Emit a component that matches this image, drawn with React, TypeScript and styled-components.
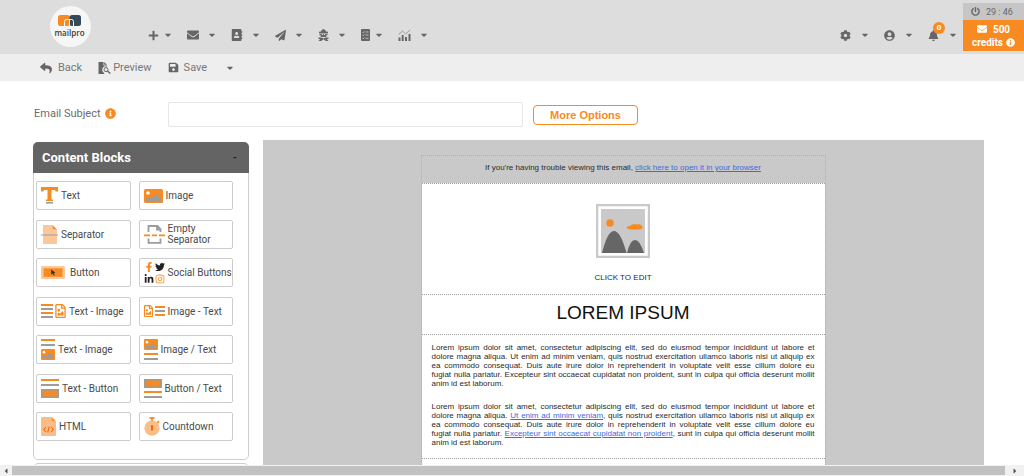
import React from "react";
import styled, { createGlobalStyle } from "styled-components";
import {
  FaAddressBook,
  FaBell,
  FaCaretDown,
  FaCaretLeft,
  FaCaretRight,
  FaCog,
  FaEnvelope,
  FaFacebookF,
  FaInfoCircle,
  FaInstagram,
  FaLinkedinIn,
  FaPaperPlane,
  FaPlus,
  FaPowerOff,
  FaRegFileImage,
  FaReply,
  FaSave,
  FaTwitter,
  FaUserCircle,
} from "react-icons/fa";

const orange = "#f78a20";
const dark = "#666666";
const grey = "#9c9c9c";
const pale = "#fbbd87";

const GlobalStyle = createGlobalStyle`
  * { box-sizing: border-box; }
  body { margin: 0; background: #fff; font-family: Roboto, sans-serif; color: ${dark}; overflow: hidden; }
  button { font: inherit; color: inherit; background: none; border: 0; padding: 0; margin: 0; cursor: pointer; }
  svg { display: block; flex: none; }
`;

const Page = styled.div`
  display: flex;
  flex-direction: column;
  height: 100vh;
  overflow: hidden;
`;

const Header = styled.header`
  display: flex;
  flex: none;
  height: 54px;
  background: #dddddd;
`;

const LogoLink = styled.a`
  width: 41px;
  height: 41px;
  margin: 6px 57px 0 50px;
`;

const Nav = styled.nav`
  display: flex;
  align-items: center;
  gap: 16px;
  height: 16px;
  margin-top: 27px;
`;

const NavButton = styled.button<{ $gap?: number }>`
  display: flex;
  align-items: center;
  gap: ${(p) => p.$gap ?? 10}px;
  height: 16px;
`;

const Caret = styled(FaCaretDown)`
  width: 6px;
  height: 10px;
  overflow: visible;
`;

const Spacer = styled.div`
  flex: 1;
`;

const BellWrap = styled.span`
  position: relative;
  display: block;
`;

const Badge = styled.span`
  position: absolute;
  left: 5px;
  top: -8px;
  width: 12px;
  height: 12px;
  border-radius: 6px;
  background: ${orange};
  color: #fff;
  font-size: 8px;
  font-weight: 700;
  line-height: 12px;
  text-align: center;
`;

const Account = styled.div`
  width: 61px;
  margin: 3px 0 0 7px;
`;

const Timer = styled.div`
  display: flex;
  align-items: center;
  gap: 6px;
  height: 17px;
  padding-left: 8px;
  background: #c6c6c6;
  font-size: 9px;
`;

const Credits = styled.button`
  display: flex;
  flex-direction: column;
  align-items: center;
  justify-content: center;
  width: 100%;
  height: 31px;
  background: ${orange};
  color: #fff;
  font-size: 10px;
  font-weight: 700;
  line-height: 13px;
`;

const CreditLine = styled.span<{ $gap: number }>`
  display: flex;
  align-items: center;
  gap: ${(p) => p.$gap}px;
`;

const Toolbar = styled.div`
  display: flex;
  flex: none;
  align-items: center;
  height: 27px;
  padding-left: 40px;
  background: #eeeeee;
  font-size: 11px;
  color: #777;
  gap: 16px;
`;

const Tool = styled.button<{ $gap: number }>`
  display: flex;
  align-items: center;
  gap: ${(p) => p.$gap}px;
  svg { color: ${dark}; }
`;

const MenuTool = styled(Tool)`
  padding-left: 4px;
`;

const Content = styled.main`
  flex: 1;
  min-height: 0;
  overflow: hidden;
  padding: 21px 40px 0 33px;
`;

const SubjectRow = styled.form`
  display: flex;
  align-items: center;
  height: 25px;
  margin-bottom: 13px;
`;

const SubjectLabel = styled.label`
  display: flex;
  align-items: center;
  gap: 4px;
  width: 135px;
  font-size: 11px;
  padding: 0 0 2px 1px;
  color: #6c6c6c;
`;

const SubjectInput = styled.input`
  flex: 0 1 355px;
  min-width: 0;
  height: 25px;
  border: 1px solid #e6e6e6;
  border-radius: 2px;
  padding: 0 6px;
  font: 11px Roboto, sans-serif;
`;

const MoreOptions = styled.button`
  height: 20px;
  width: 105px;
  margin-left: 10px;
  border: 1px solid ${orange};
  border-radius: 4px;
  background: #fff;
  color: ${orange};
  font: bold 11px "Liberation Sans", sans-serif;
`;

const Columns = styled.div`
  display: grid;
  grid-template-columns: 216px 1fr;
  gap: 14px;
`;

const Sidebar = styled.aside`
  display: flex;
  flex-direction: column;
  gap: 3px;
  padding-top: 2px;
`;

const Panel = styled.section`
  border: 1px solid #cfcfcf;
  border-radius: 5px;
  min-height: 20px;
`;

const PanelHead = styled.button`
  display: flex;
  align-items: center;
  justify-content: space-between;
  width: calc(100% + 2px);
  height: 31px;
  margin: -1px -1px 0;
  padding: 0 12px 0 9px;
  border-radius: 5px 5px 0 0;
  background: #646464;
  color: #fff;
  font-size: 13px;
  font-weight: 700;
`;

const Collapse = styled.span`
  color: #222;
  font-size: 11px;
`;

const Blocks = styled.div`
  display: grid;
  grid-template-columns: 1fr 1fr;
  grid-auto-rows: 29px;
  column-gap: 8px;
  align-content: space-between;
  min-height: 286px;
  padding: 8px 15px 18px 2px;
`;

const BlockButton = styled.button<{ $gap?: number }>`
  display: flex;
  align-items: center;
  gap: ${(p) => p.$gap ?? 3}px;
  padding-left: 4px;
  border: 1px solid #cccccc;
  border-radius: 2px;
  background: #fff;
  color: #4a4a4a;
  font-size: 10px;
  line-height: 11px;
  text-align: left;
  white-space: nowrap;
`;

const SocialIcons = styled.span`
  display: grid;
  grid-template-columns: 10px 10px;
  gap: 2px 1px;
  place-items: center;
  color: #222;
`;

const IconPair = styled.span`
  display: flex;
  align-items: center;
  gap: 2px;
  color: ${orange};
`;

const FileImage = styled(FaRegFileImage)<{ $width: number }>`
  width: ${(p) => p.$width}px;
  height: 14px;
`;

const Canvas = styled.section`
  display: flex;
  justify-content: center;
  align-items: flex-start;
  min-height: 400px;
  padding: 15px 1px 0 0;
  background: #c9c9c9;
`;

const Email = styled.article`
  width: 405px;
  font-family: "Liberation Sans", Arial, sans-serif;
  font-size: 8px;
  line-height: 9px;
  color: #2a2a2a;
  border: 1px dotted #b0b0b0;
`;

const Notice = styled.p`
  margin: 0;
  height: 27px;
  line-height: 24px;
  text-align: center;
`;

const EmailSection = styled.div`
  background: #fff;
  border-top: 1px dotted #a0a0a0;
`;

const ImageSection = styled(EmailSection)`
  display: flex;
  flex-direction: column;
  align-items: center;
  gap: 15px;
  height: 111px;
  padding-top: 20px;
`;

const Title = styled.h1`
  margin: 0;
  height: 39px;
  font-size: 19px;
  font-weight: 400;
  line-height: 35px;
  text-align: center;
  color: #111;
`;

const TextSection = styled(EmailSection)`
  display: flex;
  flex-direction: column;
  gap: 14px;
  padding: 8px 10px 11px;
`;

const Paragraph = styled.p`
  margin: 0;
`;

const Line = styled.span`
  display: block;
  text-align: justify;
  text-align-last: justify;

  &:last-child {
    text-align-last: left;
  }
`;

const EmailLink = styled.a`
  color: #4169e1;
  text-decoration: underline;
`;

const Footer = styled(EmailSection)`
  min-height: 60px;
`;

const ScrollTrack = styled.div`
  display: flex;
  flex: none;
  align-items: center;
  height: 11px;
  background: #f1f1f1;
  color: #555;
`;

const ScrollArrow = styled.span<{ $width: number }>`
  display: flex;
  justify-content: center;
  width: ${(p) => p.$width}px;
`;

const ScrollThumb = styled.div`
  flex: 1;
  height: 9px;
  background: #c1c1c1;
`;

const Logo = () => (
  <svg width="41" height="41" viewBox="0 0 41 41">
    <circle cx="20.500" cy="20.500" r="20.500" fill="#f6f6f6" />
    <rect x="8" y="9" width="12" height="11" rx="2.500" fill={orange} />
    <rect x="19.500" y="9" width="11.500" height="11" rx="2.500" fill="#34495a" />
    <path d="M14.500 20v-4.500q0-2 2-2h5q2 0 2 2V20M19.500 13.500V20" fill="none" stroke="#f6f6f6" strokeWidth="1" />
    <text x="19.500" y="29.500" textAnchor="middle" fontFamily="Open Sans, sans-serif" fontSize="8" fontWeight="600" fill="#3a3a3a">mailpro</text>
  </svg>
);

const AutomationIcon = () => (
  <svg width="11" height="12" viewBox="0 0 11 12" fill="currentColor">
    <path d="M3 2.500Q3.300.8 4.300.8L5.500 0l1.200.8Q7.700.8 8 2.500l2 .3v1.400H1V2.800z" />
    <path d="M1.500 4.800h8v1.400H8.300V8H2.700V6.200H1.500z" />
    <path d="M.500 8.500h3l2 1 2-1h3V10H8.800l1.700 2H7.800L5.500 10.300 3.200 12H.500l1.700-2H.500z" />
    <path d="M3.800 5h1.200v1H3.800zM6 5h1.200v1H6z" fill="#ddd" />
  </svg>
);

const FormIcon = () => (
  <svg width="9" height="12" viewBox="0 0 9 12">
    <rect width="9" height="12" rx="1" fill="currentColor" />
    <path d="M1.500 3l.7.7L3.400 2.300M1.500 6l.7.7 1.200-1.400M1.500 9.200l.7.7 1.200-1.400M4.500 3h3M4.500 6h3M4.500 9.300h3" fill="none" stroke="#ddd" strokeWidth=".7" />
  </svg>
);

const ChartIcon = () => (
  <svg width="13" height="12" viewBox="0 0 13 12">
    <path d="M.500 12V8.500h2V12zM3.700 12V6h2v6zM7 12V8h2v4zM10.500 12V5h2v7z" fill="currentColor" />
    <path d="M.700 5.500L4.500 2l3.200 3L12 1" fill="none" stroke="#999" strokeWidth="1" />
  </svg>
);

const PreviewIcon = () => (
  <svg width="13" height="12" viewBox="0 0 13 12">
    <path d="M.5 0h5v3.500H9v1.200A3.300 3.300 0 0 0 5.200 10L6.500 12h-6zM6.200 0L9 2.800H6.200z" fill="currentColor" />
    <circle cx="8" cy="7.600" r="2" fill="none" stroke="currentColor" strokeWidth="1" />
    <path d="M9.500 9l2.800 2.600" stroke="currentColor" strokeWidth="1.300" />
  </svg>
);

const TextIcon = () => (
  <svg width="17" height="17" viewBox="0 0 17 17">
    <path d="M0 0h17v4.500h-2.300L14 3h-3.500v9.500H12V14H5v-1.500h1.500V3H3l-.7 1.500H0z" fill={orange} />
    <path d="M5 15h7v1.600H5z" fill={grey} />
  </svg>
);

const Landscape = ({ width, height }: { width: number; height: number }) => (
  <svg width={width} height={height} viewBox="0 0 19 14" preserveAspectRatio="none">
    <rect width="19" height="14" rx="1.500" fill={orange} />
    <circle cx="4" cy="4" r="1.800" fill="#fff" />
    <path d="M2 12V10l3-2 2 1.500L12 5l5 5v2z" fill={grey} />
  </svg>
);

const SeparatorIcon = () => (
  <svg width="17" height="19" viewBox="0 0 17 19">
    <path d="M2 0h9.500v4.500H16V19H2z" fill="#fcc79a" />
    <path d="M11.500 0L16 4.500h-4.500z" fill={orange} />
    <path d="M0 10h17" stroke={grey} strokeWidth="1" />
  </svg>
);

const EmptySeparatorIcon = () => (
  <svg width="21" height="19" viewBox="0 0 21 19" fill="none" strokeWidth="1.800">
    <path d="M4.500 7V1h9l3 3v3M4.500 13.500v4.300h12v-4.300M13 1v3.500h3.500" stroke={grey} />
    <path d="M0 10.300h6M8 10.300h5M15 10.300h6" stroke={orange} />
  </svg>
);

const ButtonIcon = () => (
  <svg width="24" height="13" viewBox="0 0 24 13">
    <rect width="24" height="13" rx="1.500" fill="#fcc79a" />
    <rect x="2.500" y="2.300" width="19" height="8.500" fill={orange} />
    <path d="M10 3.500l4.500 3.200-1.800.4 1 2-1 .4-.9-2-1.400 1.200z" fill="#2a3138" />
  </svg>
);

const Lines = ({ width, pitch, colors }: { width: number; pitch: number; colors: string[] }) => {
  const height = (colors.length - 1) * pitch + 2;
  return (
    <svg width={width} height={height} viewBox={`0 0 ${width} ${height}`}>
      {colors.map((color, i) => (
        <rect key={i} y={i * pitch} width={width} height={2} fill={color} />
      ))}
    </svg>
  );
};

const Stack = styled.span`
  display: flex;
  flex-direction: column;
  gap: 3px;
`;

const ButtonShape = () => (
  <svg width="18" height="9" viewBox="0 0 18 9">
    <rect x=".8" y=".8" width="16.400" height="7.400" fill={orange} stroke={grey} strokeWidth="1.600" />
  </svg>
);

const HtmlIcon = () => (
  <svg width="15" height="19" viewBox="0 0 15 19">
    <path d="M1 0h9.500v4.500H15V18q0 1-1 1H1q-1 0-1-1V1q0-1 1-1z" fill={pale} />
    <path d="M10.500 0L15 4.500h-4.500z" fill={orange} />
    <path d="M5 10l-2.300 2.500L5 15M10 10l2.300 2.500L10 15M8.300 9.500l-1.600 6" fill="none" stroke="#f26a10" strokeWidth="1.100" />
  </svg>
);

const CountdownIcon = () => (
  <svg width="16" height="19" viewBox="0 0 16 19">
    <path d="M5.500 0h5v1.800H9V4H7V1.800H5.500zM12.500 5l1.800-1.600 1.500 1.500L14 6.600z" fill={orange} />
    <circle cx="8" cy="11.200" r="7.600" fill={pale} />
    <path d="M7 8h2v5.500H7z" fill="#f26a10" />
  </svg>
);

const Placeholder = () => (
  <svg width="54" height="54" viewBox="0 0 54 54" role="img" aria-label="Image placeholder">
    <rect x="1" y="1" width="52" height="52" fill="#fff" stroke="#c9c9c9" strokeWidth="2.500" />
    <rect x="5" y="5" width="44" height="44" fill="#c9c9c9" />
    <path d="M6 49Q11.500 27 18 27t12.500 22zM31 49q3-13 8-13t9 13z" fill={dark} />
    <circle cx="14" cy="19" r="3.800" fill={orange} />
    <path d="M32 25q-2-1-1-2.300l3-.7q1-2 3-1.500 1.500-1.200 3.500 0 4-1 4.500 1 2 .3 1.500 2-.5 1.800-3 2h-9z" fill={orange} />
  </svg>
);

export default function App() {
  return (
    <>
      <GlobalStyle />
      <Page>
        <Header>
          <LogoLink href="#" aria-label="mailpro"><Logo /></LogoLink>
          <Nav aria-label="Main">
            <NavButton $gap={6} aria-label="Create"><FaPlus size={11} /><Caret /></NavButton>
            <NavButton aria-label="Messages"><FaEnvelope size={12} /><Caret /></NavButton>
            <NavButton aria-label="Contacts"><FaAddressBook size={12} /><Caret /></NavButton>
            <NavButton aria-label="Campaigns"><FaPaperPlane size={11} /><Caret /></NavButton>
            <NavButton aria-label="Automation"><AutomationIcon /><Caret /></NavButton>
            <NavButton $gap={6} aria-label="Forms"><FormIcon /><Caret /></NavButton>
            <NavButton aria-label="Statistics"><ChartIcon /><Caret /></NavButton>
          </Nav>
          <Spacer />
          <Nav aria-label="Account">
            <NavButton $gap={11} aria-label="Settings"><FaCog size={11} /><Caret /></NavButton>
            <NavButton $gap={11} aria-label="Profile"><FaUserCircle size={11} /><Caret /></NavButton>
            <NavButton $gap={11} aria-label="Notifications">
              <BellWrap><FaBell size={11} /><Badge>0</Badge></BellWrap><Caret />
            </NavButton>
          </Nav>
          <Account>
            <Timer><FaPowerOff size={9} />29 : 46</Timer>
            <Credits>
              <CreditLine $gap={6}><FaEnvelope size={10} />500</CreditLine>
              <CreditLine $gap={3}>credits <FaInfoCircle size={9} /></CreditLine>
            </Credits>
          </Account>
        </Header>
        <Toolbar>
          <Tool $gap={6}><FaReply size={12} />Back</Tool>
          <Tool $gap={2}><PreviewIcon />Preview</Tool>
          <Tool $gap={5}><FaSave size={11} />Save</Tool>
          <MenuTool $gap={0} aria-label="More save options"><Caret /></MenuTool>
        </Toolbar>
        <Content>
          <SubjectRow>
            <SubjectLabel htmlFor="subject">Email Subject <FaInfoCircle size={11} color={orange} /></SubjectLabel>
            <SubjectInput id="subject" type="text" />
            <MoreOptions type="button">More Options</MoreOptions>
          </SubjectRow>
          <Columns>
            <Sidebar>
              <Panel>
                <PanelHead>Content Blocks<Collapse>-</Collapse></PanelHead>
                <Blocks>
                  <BlockButton><TextIcon />Text</BlockButton>
                  <BlockButton><Landscape width={19} height={14} />Image</BlockButton>
                  <BlockButton><SeparatorIcon />Separator</BlockButton>
                  <BlockButton><EmptySeparatorIcon /><span>Empty<br />Separator</span></BlockButton>
                  <BlockButton $gap={5}><ButtonIcon />Button</BlockButton>
                  <BlockButton>
                    <SocialIcons>
                      <FaFacebookF size={10} color={orange} />
                      <FaTwitter size={10} />
                      <FaLinkedinIn size={10} />
                      <FaInstagram size={10} color={orange} />
                    </SocialIcons>
                    Social Buttons
                  </BlockButton>
                  <BlockButton>
                    <IconPair><Lines width={12} pitch={4} colors={[orange, grey, orange, grey]} /><FileImage $width={11} /></IconPair>
                    Text - Image
                  </BlockButton>
                  <BlockButton>
                    <IconPair><FileImage $width={9} /><Lines width={10} pitch={4} colors={[orange, grey, orange]} /></IconPair>
                    Image - Text
                  </BlockButton>
                  <BlockButton>
                    <Stack><Lines width={14} pitch={5} colors={[orange, grey]} /><Landscape width={14} height={11} /></Stack>
                    Text - Image
                  </BlockButton>
                  <BlockButton>
                    <Stack><Landscape width={14} height={11} /><Lines width={14} pitch={5} colors={[orange, grey]} /></Stack>
                    Image / Text
                  </BlockButton>
                  <BlockButton>
                    <Stack><Lines width={18} pitch={5} colors={[orange, grey]} /><ButtonShape /></Stack>
                    Text - Button
                  </BlockButton>
                  <BlockButton>
                    <Stack><ButtonShape /><Lines width={18} pitch={5} colors={[orange, grey]} /></Stack>
                    Button / Text
                  </BlockButton>
                  <BlockButton><HtmlIcon />HTML</BlockButton>
                  <BlockButton><CountdownIcon />Countdown</BlockButton>
                </Blocks>
              </Panel>
              <Panel />
            </Sidebar>
            <Canvas>
              <Email>
                <Notice>
                  If you're having trouble viewing this email, <EmailLink href="#">click here to open it in your browser</EmailLink>
                </Notice>
                <ImageSection><Placeholder /><span>CLICK TO EDIT</span></ImageSection>
                <EmailSection><Title>LOREM IPSUM</Title></EmailSection>
                <TextSection>
                  <Paragraph>
                    <Line>Lorem ipsum dolor sit amet, consectetur adipiscing elit, sed do eiusmod tempor incididunt ut labore et </Line>
                    <Line>dolore magna aliqua. Ut enim ad minim veniam, quis nostrud exercitation ullamco laboris nisi ut aliquip ex </Line>
                    <Line>ea commodo consequat. Duis aute irure dolor in reprehenderit in voluptate velit esse cillum dolore eu </Line>
                    <Line>fugiat nulla pariatur. Excepteur sint occaecat cupidatat non proident, sunt in culpa qui officia deserunt mollit </Line>
                    <Line>anim id est laborum.</Line>
                  </Paragraph>
                  <Paragraph>
                    <Line>Lorem ipsum dolor sit amet, consectetur adipiscing elit, sed do eiusmod tempor incididunt ut labore et </Line>
                    <Line>dolore magna aliqua. <EmailLink href="#">Ut enim ad minim veniam</EmailLink>, quis nostrud exercitation ullamco laboris nisi ut aliquip ex </Line>
                    <Line>ea commodo consequat. Duis aute irure dolor in reprehenderit in voluptate velit esse cillum dolore eu </Line>
                    <Line>fugiat nulla pariatur. <EmailLink href="#">Excepteur sint occaecat cupidatat non proident</EmailLink>, sunt in culpa qui officia deserunt mollit </Line>
                    <Line>anim id est laborum.</Line>
                  </Paragraph>
                </TextSection>
                <Footer />
              </Email>
            </Canvas>
          </Columns>
        </Content>
        <ScrollTrack>
          <ScrollArrow $width={12}><FaCaretLeft size={8} /></ScrollArrow>
          <ScrollThumb />
          <ScrollArrow $width={19}><FaCaretRight size={8} /></ScrollArrow>
        </ScrollTrack>
      </Page>
    </>
  );
}
